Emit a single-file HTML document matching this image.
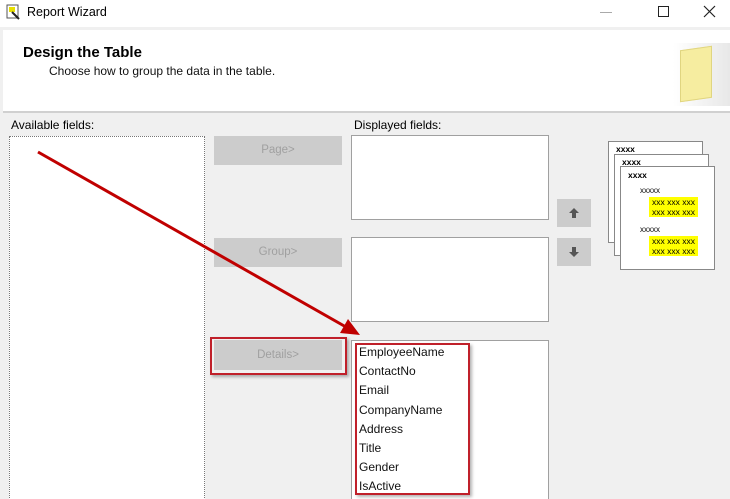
<!DOCTYPE html>
<html><head><style>
*{margin:0;padding:0;box-sizing:border-box}
html,body{width:730px;height:499px;overflow:hidden}
body{background:#f0f0f0;font-family:"Liberation Sans",sans-serif;font-size:12px;color:#000;position:relative}
.a{position:absolute}
.box{position:absolute;background:#fff;border:1px solid #a0a0a0}
.btn{position:absolute;background:#cccccc;color:#a0a0a0;text-align:center;font-size:11.5px}
.x{font-size:8.5px;font-weight:bold;letter-spacing:0px}
.y{background:#ffff00;font-size:8.5px;line-height:10px;padding:0 3px;position:absolute;letter-spacing:0px;white-space:nowrap}
</style></head><body>
<div class="a" style="left:0;top:0;width:730px;height:27px;background:#fff"></div>
<svg class="a" style="left:6px;top:4px" width="15" height="16"><rect x="1" y="1" width="11" height="13" fill="#fff" stroke="#555"/><rect x="3" y="3" width="6" height="5" fill="#e8e000"/><path d="M6 8 L13 15" stroke="#222" stroke-width="2"/></svg>
<div class="a" style="left:27px;top:5px;font-size:12.5px">Report Wizard</div>
<div class="a" style="left:600px;top:12px;width:12px;height:1px;background:#aaa"></div>
<div class="a" style="left:658px;top:6px;width:11px;height:11px;border:1px solid #222"></div>
<svg class="a" style="left:703px;top:5px" width="13" height="13"><path d="M1 1L12 12M12 1L1 12" stroke="#222" stroke-width="1.2"/></svg>
<div class="a" style="left:3px;top:30px;width:727px;height:83px;background:#fff;border-bottom:2px solid #d0d0d0"></div>
<div class="a" style="left:23px;top:44px;font-size:15px;font-weight:bold">Design the Table</div>
<div class="a" style="left:49px;top:64px;font-size:12px;color:#111">Choose how to group the data in the table.</div>
<div class="a" style="left:673px;top:43px;width:57px;height:63px;background:linear-gradient(90deg,#fff,#e8e8e8)"></div>
<div class="a" style="left:680px;top:48px;width:32px;height:52px;background:#f6eda0;border:1px solid #e0d580;transform:skewY(-8deg)"></div>
<div class="a" style="left:11px;top:118px;font-size:12px">Available fields:</div>
<div class="a" style="left:354px;top:118px;font-size:12px">Displayed fields:</div>
<div class="box" style="left:9px;top:136px;width:196px;height:370px;border:1px dotted #777"></div>
<div class="btn" style="left:214px;top:136px;width:128px;height:29px;line-height:29px">Page&gt;</div>
<div class="btn" style="left:214px;top:238px;width:128px;height:29px;line-height:29px">Group&gt;</div>
<div class="btn" style="left:214px;top:340px;width:128px;height:30px;line-height:30px">Details&gt;</div>
<div class="a" style="left:210px;top:337px;width:137px;height:38px;border:2px solid #c0202a;box-shadow:2px 2px 3px rgba(0,0,0,.3)"></div>
<div class="box" style="left:351px;top:135px;width:198px;height:85px"></div>
<div class="box" style="left:351px;top:237px;width:198px;height:85px"></div>
<div class="box" style="left:351px;top:340px;width:198px;height:170px"></div>
<div class="a" style="left:359px;top:343px;font-size:12px;line-height:19.2px;color:#111">EmployeeName<br>ContactNo<br>Email<br>CompanyName<br>Address<br>Title<br>Gender<br>IsActive</div>
<div class="a" style="left:355px;top:343px;width:115px;height:152px;border:2px solid #c0202a;box-shadow:2px 2px 3px rgba(0,0,0,.3)"></div>
<div class="btn" style="left:557px;top:199px;width:34px;height:28px"></div>
<div class="btn" style="left:557px;top:238px;width:34px;height:28px"></div>
<svg class="a" style="left:567px;top:207px" width="14" height="12"><path d="M7 1L12 6H9V11H5V6H2Z" fill="#555"/></svg>
<svg class="a" style="left:567px;top:246px" width="14" height="12"><path d="M7 11L12 6H9V1H5V6H2Z" fill="#555"/></svg>
<div class="a" style="left:608px;top:141px;width:95px;height:102px;background:#fff;border:1px solid #888"><span class="x" style="position:absolute;left:7px;top:2px">xxxx</span></div>
<div class="a" style="left:614px;top:154px;width:95px;height:102px;background:#fff;border:1px solid #888"><span class="x" style="position:absolute;left:7px;top:2px">xxxx</span></div>
<div class="a" style="left:620px;top:166px;width:95px;height:104px;background:#fff;border:1px solid #888">
<span class="x" style="position:absolute;left:7px;top:3px">xxxx</span>
<span style="position:absolute;left:19px;top:19px;font-size:8px">xxxxx</span>
<div class="y" style="left:28px;top:30px">xxx xxx xxx<br>xxx xxx xxx</div>
<span style="position:absolute;left:19px;top:58px;font-size:8px">xxxxx</span>
<div class="y" style="left:28px;top:69px">xxx xxx xxx<br>xxx xxx xxx</div>
</div>
<svg class="a" style="left:0;top:0" width="730" height="499"><line x1="38" y1="152" x2="346" y2="327" stroke="#c00000" stroke-width="3"/><path d="M360 335 L340 333 L348 319 Z" fill="#c00000"/></svg>
</body></html>
